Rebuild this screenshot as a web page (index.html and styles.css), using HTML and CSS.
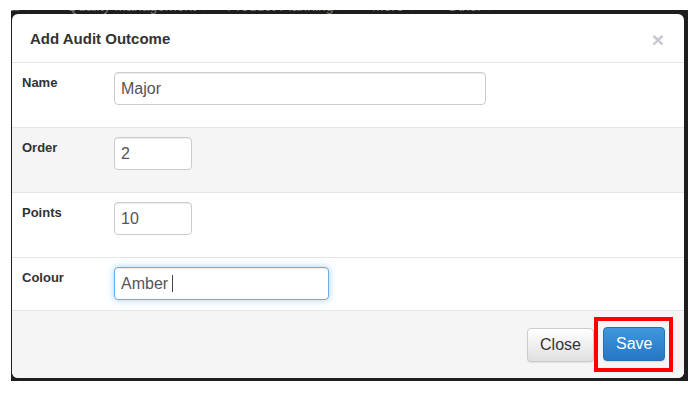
FILE: index.html
```html
<!DOCTYPE html>
<html>
<head>
    <meta charset="utf-8">
    <title>Add Audit Outcome</title>
    <link rel="stylesheet" href="styles.css">
</head>
<body>
    <div class="backdrop">
        <div class="navbar-strip">
            <span class="nav-item nav-first">al &#9662;</span>
            <span class="nav-item nav-q">Quality Management &#9662;</span>
            <span class="nav-item nav-p">Product Planning &#9662;</span>
            <span class="nav-item nav-m">More &#9662;</span>
            <span class="nav-item nav-o">Other &#9662;</span>
        </div>

        <div class="modal">
            <div class="modal-header">
                <h4 class="modal-title">Add Audit Outcome</h4>
                <span class="close">&times;</span>
            </div>

            <div class="form-row">
                <label>Name</label>
                <input type="text" class="field field-wide" value="Major">
            </div>
            <div class="form-row form-row-alt">
                <label>Order</label>
                <input type="text" class="field field-short" value="2">
            </div>
            <div class="form-row">
                <label>Points</label>
                <input type="text" class="field field-short" value="10">
            </div>
            <div class="form-row form-row-last">
                <label>Colour</label>
                <div class="field field-mid field-focus">Amber<span class="caret"></span></div>
            </div>

            <div class="modal-footer">
                <button class="btn btn-default">Close</button>
                <div class="highlight">
                    <button class="btn btn-primary">Save</button>
                </div>
            </div>
        </div>
    </div>
</body>
</html>
```

FILE: styles.css
```css
* {
    margin: 0;
    padding: 0;
    box-sizing: border-box;
}
body {
    font-family: "Liberation Sans", Arial, sans-serif;
    background-color: #fff;
    color: #333;
}
.backdrop {
    margin: 10px 10px 0 11px;
    padding: 4px 4px 3px 1px;
    background-color: #1e1e1e;
    position: relative;
}
.navbar-strip {
    position: absolute;
    top: 0;
    left: 0;
    right: 0;
    height: 4px;
    overflow: hidden;
}
.nav-item {
    position: absolute;
    top: -12px;
    font-size: 14px;
    line-height: 16px;
    color: #7a7a7a;
    white-space: nowrap;
}
.nav-first { left: -2px; }
.nav-q { left: 56px; }
.nav-p { left: 216px; }
.nav-m { left: 361px; }
.nav-o { left: 436px; }

.modal {
    background-color: #fff;
    border-radius: 6px;
    overflow: hidden;
}
.modal-header {
    display: flex;
    align-items: center;
    justify-content: space-between;
    height: 49px;
    padding: 0 20px 0 18px;
    border-bottom: 1px solid #e5e5e5;
}
.modal-title {
    font-size: 15px;
    font-weight: bold;
    color: #333;
    margin-top: 0;
}
.close {
    font-size: 21px;
    font-weight: bold;
    color: #c8c8c8;
    line-height: 1;
    margin-top: 2px;
}
.form-row {
    display: flex;
    align-items: flex-start;
    padding: 9px 10px 22px;
    border-bottom: 1px solid #e5e5e5;
}
.form-row-alt {
    background-color: #f5f5f5;
}
.form-row-last {
    padding-bottom: 10px;
}
.form-row label {
    width: 92px;
    padding-top: 3px;
    font-size: 13px;
    line-height: 16px;
    font-weight: bold;
    color: #333;
}
.field {
    height: 33px;
    padding: 0 6px;
    font-family: inherit;
    font-size: 16px;
    color: #555;
    background-color: #fff;
    border: 1px solid #ccc;
    border-radius: 4px;
    box-shadow: inset 0 1px 1px rgba(0,0,0,0.075);
    outline: none;
}
.field-wide {
    width: 372px;
}
.field-short {
    width: 78px;
}
.field-mid {
    width: 215px;
    display: flex;
    align-items: center;
}
.field-focus {
    border-color: #66afe9;
    box-shadow: inset 0 1px 1px rgba(0,0,0,0.075), 0 0 7px rgba(102,175,233,0.6);
}
.caret {
    display: inline-block;
    width: 1px;
    height: 17px;
    margin-left: 4px;
    background-color: #444;
}
.modal-footer {
    display: flex;
    justify-content: flex-end;
    align-items: center;
    padding: 6px 11px 6px 0;
    background-color: #f5f5f5;
}
.btn {
    height: 34px;
    padding: 0 12px;
    font-family: inherit;
    font-size: 16px;
    border-radius: 4px;
    cursor: pointer;
}
.btn-default {
    width: 67px;
    color: #333;
    background-image: linear-gradient(to bottom, #ffffff, #e0e0e0);
    border: 1px solid #ccc;
    box-shadow: 0 1px 1px rgba(0,0,0,0.08);
}
.highlight {
    border: 4px solid #f00;
    padding: 6px 4px 7px 5px;
}
.btn-primary {
    width: 62px;
    color: #fff;
    background-image: linear-gradient(to bottom, #3f97dd, #2677c4);
    border: 1px solid #2a6fb0;
    box-shadow: 0 1px 1px rgba(0,0,0,0.1);
}
```
